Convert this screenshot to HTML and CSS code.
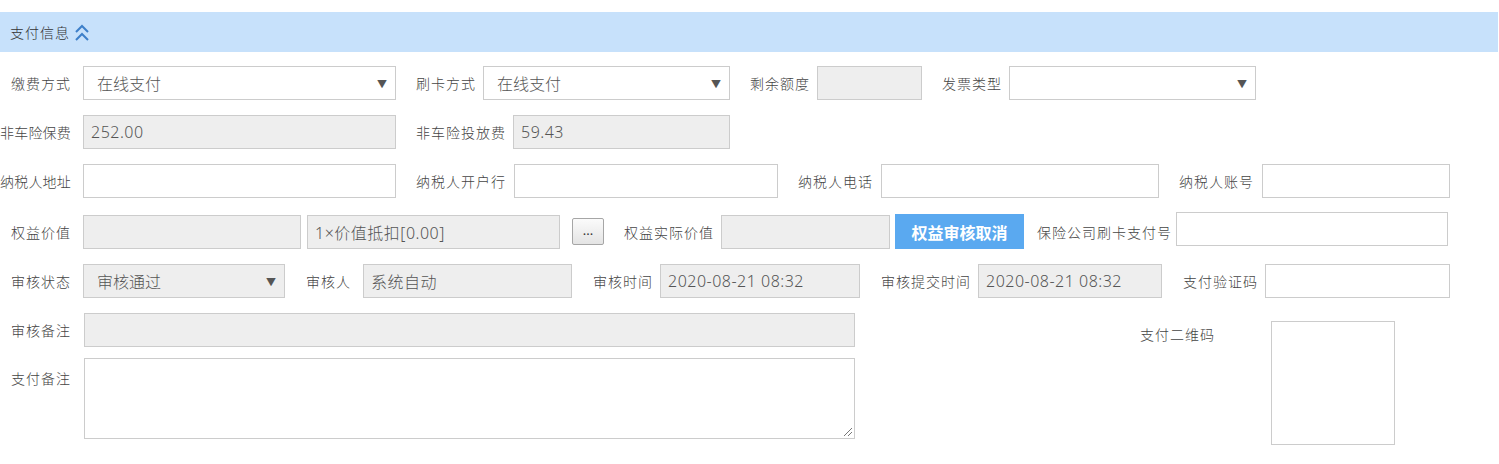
FILE: index.html
```html
<!DOCTYPE html>
<html lang="zh-CN">
<head>
    <meta charset="UTF-8">
    <title>支付信息</title>
    <link rel="stylesheet" href="styles.css">
</head>
<body>
    <div class="panel">
        <div class="panel-title">
            支付信息
            <svg class="fold" width="16" height="18" viewBox="0 0 16 18">
                <path d="M2 8 L8 2 L14 8 M2 16 L8 10 L14 16" fill="none" stroke="#3d7fc9" stroke-width="2"/>
            </svg>
        </div>

        <div class="row r1">
            <label class="lbl first">缴费方式</label>
            <div class="ctl select w313">在线支付<span class="arrow">▼</span></div>
            <label class="lbl">刷卡方式</label>
            <div class="ctl select w247">在线支付<span class="arrow">▼</span></div>
            <label class="lbl">剩余额度</label>
            <div class="ctl ro w105"></div>
            <label class="lbl">发票类型</label>
            <div class="ctl select w247"><span class="arrow">▼</span></div>
        </div>

        <div class="row">
            <label class="lbl first long">非车险保费</label>
            <div class="ctl ro w313">252.00</div>
            <label class="lbl">非车险投放费</label>
            <div class="ctl ro w217">59.43</div>
        </div>

        <div class="row r3">
            <label class="lbl first long">纳税人地址</label>
            <div class="ctl w313"></div>
            <label class="lbl">纳税人开户行</label>
            <div class="ctl w264"></div>
            <label class="lbl">纳税人电话</label>
            <div class="ctl w278"></div>
            <label class="lbl">纳税人账号</label>
            <div class="ctl w188"></div>
        </div>

        <div class="row r4">
            <label class="lbl first">权益价值</label>
            <div class="ctl ro w218"></div>
            <div class="ctl ro w253 pair">1×价值抵扣[0.00]</div>
            <button class="dots">...</button>
            <label class="lbl">权益实际价值</label>
            <div class="ctl ro w169"></div>
            <button class="btn-blue">权益审核取消</button>
            <label class="lbl tight">保险公司刷卡支付号</label>
            <div class="ctl w272 up"></div>
        </div>

        <div class="row r5">
            <label class="lbl first">审核状态</label>
            <div class="ctl select ro w202">审核通过<span class="arrow">▼</span></div>
            <label class="lbl wide">审核人</label>
            <div class="ctl ro w209">系统自动</div>
            <label class="lbl">审核时间</label>
            <div class="ctl ro w200">2020-08-21 08:32</div>
            <label class="lbl">审核提交时间</label>
            <div class="ctl ro w184">2020-08-21 08:32</div>
            <label class="lbl">支付验证码</label>
            <div class="ctl w185"></div>
        </div>

        <div class="bottom">
            <div class="notes">
                <div class="row">
                    <label class="lbl first">审核备注</label>
                    <div class="ctl ro w771"></div>
                </div>
                <div class="row note-row">
                    <label class="lbl first top">支付备注</label>
                    <div class="ctl area w771"><span class="grip"></span></div>
                </div>
            </div>
            <div class="qr">
                <span class="qr-label">支付二维码</span>
                <div class="qr-box"></div>
            </div>
        </div>
    </div>
</body>
</html>
```

FILE: styles.css
```css
* {
    margin: 0;
    padding: 0;
    box-sizing: border-box;
}

body {
    background: #fff;
    font-family: "Noto Sans", "Noto Sans CJK SC", sans-serif;
    color: #333;
    overflow: hidden;
}

.panel {
    padding-top: 12px;
}

.panel-title {
    width: 1498px;
    height: 40px;
    background: #c7e1fb;
    display: flex;
    align-items: center;
    padding-left: 10px;
    font-size: 14px;
    font-weight: 300;
    letter-spacing: 1px;
    color: #333;
}

.fold {
    margin-left: 4px;
    margin-top: 1px;
}

.row {
    display: flex;
    align-items: center;
    height: 34px;
    margin-top: 15px;
}

.r1 {
    margin-top: 14px;
}

.r4 {
    height: 35px;
    margin-top: 16px;
}

.r5 {
    margin-top: 15px;
}

.lbl {
    font-size: 14px;
    font-weight: 300;
    letter-spacing: 1px;
    color: #444;
    white-space: nowrap;
    margin-left: 20px;
    margin-right: 7px;
}

.r3 .lbl {
    margin-right: 8px;
}

.lbl.first,
.r3 .lbl.first {
    width: 71px;
    margin-left: 0;
    margin-right: 12px;
    display: flex;
    justify-content: flex-end;
}

.lbl.long {
    letter-spacing: 0.2px;
}

.lbl.wide {
    margin-right: 12px;
}

.lbl.tight {
    margin-left: 13px;
    margin-right: 4px;
}

.lbl.top {
    align-self: flex-start;
    margin-top: 10px;
}

.ctl {
    position: relative;
    height: 34px;
    border: 1px solid #ccc;
    background: #fff;
    font-size: 16px;
    font-weight: 300;
    color: #555;
    padding-left: 7px;
    letter-spacing: 0.5px;
    display: flex;
    align-items: center;
    white-space: nowrap;
}

.ctl.ro {
    background: #eee;
}

.ctl.select {
    padding-left: 13px;
    letter-spacing: 0;
}

.arrow {
    position: absolute;
    right: 8px;
    top: 9px;
    font-size: 10px;
    color: #555;
}

.ctl.pair {
    margin-left: 6px;
}

.ctl.up {
    align-self: flex-start;
    margin-top: -2px;
}

.w105 { width: 105px; }
.w169 { width: 169px; }
.w184 { width: 184px; }
.w185 { width: 185px; }
.w188 { width: 188px; }
.w200 { width: 200px; }
.w202 { width: 202px; }
.w209 { width: 209px; }
.w217 { width: 217px; }
.w218 { width: 218px; }
.w247 { width: 247px; }
.w253 { width: 253px; }
.w264 { width: 264px; }
.w272 { width: 272px; }
.w278 { width: 278px; }
.w313 { width: 313px; }
.w771 { width: 771px; }

.r5 .lbl { margin-left: 21px; }
.r5 .lbl.first { margin-left: 0; }

.dots {
    width: 32px;
    height: 27px;
    margin-left: 12px;
    border: 1px solid #a6a6a6;
    border-radius: 2px;
    background: linear-gradient(#fbfbfb, #e4e4e4);
    font-family: "Noto Sans", sans-serif;
    font-size: 13px;
    color: #333;
    padding-bottom: 3px;
}

.btn-blue {
    width: 129px;
    height: 35px;
    margin-left: 5px;
    border: none;
    background: #5aa9f0;
    color: #fff;
    font-family: "Noto Sans CJK SC", sans-serif;
    font-size: 16px;
    font-weight: bold;
}

.bottom {
    display: flex;
}

.notes .row:first-child {
    margin-top: 15px;
}

.notes .lbl.first + .ctl {
    margin-left: 1px;
}

.note-row {
    height: 81px;
    margin-top: 11px;
    align-items: flex-start;
}

.ctl.area {
    height: 81px;
}

.grip {
    position: absolute;
    right: 2px;
    bottom: 2px;
    width: 8px;
    height: 8px;
    background: linear-gradient(135deg, transparent 45%, #777 45%, #777 52%, transparent 52%, transparent 72%, #777 72%, #777 80%, transparent 80%);
}

.qr {
    display: flex;
    align-items: flex-start;
    margin-left: 285px;
    margin-top: 23px;
}

.qr-label {
    font-size: 14px;
    font-weight: 300;
    letter-spacing: 1px;
    color: #444;
    margin-top: 3px;
}

.qr-box {
    width: 124px;
    height: 124px;
    margin-left: 56px;
    border: 1px solid #ccc;
}
```
